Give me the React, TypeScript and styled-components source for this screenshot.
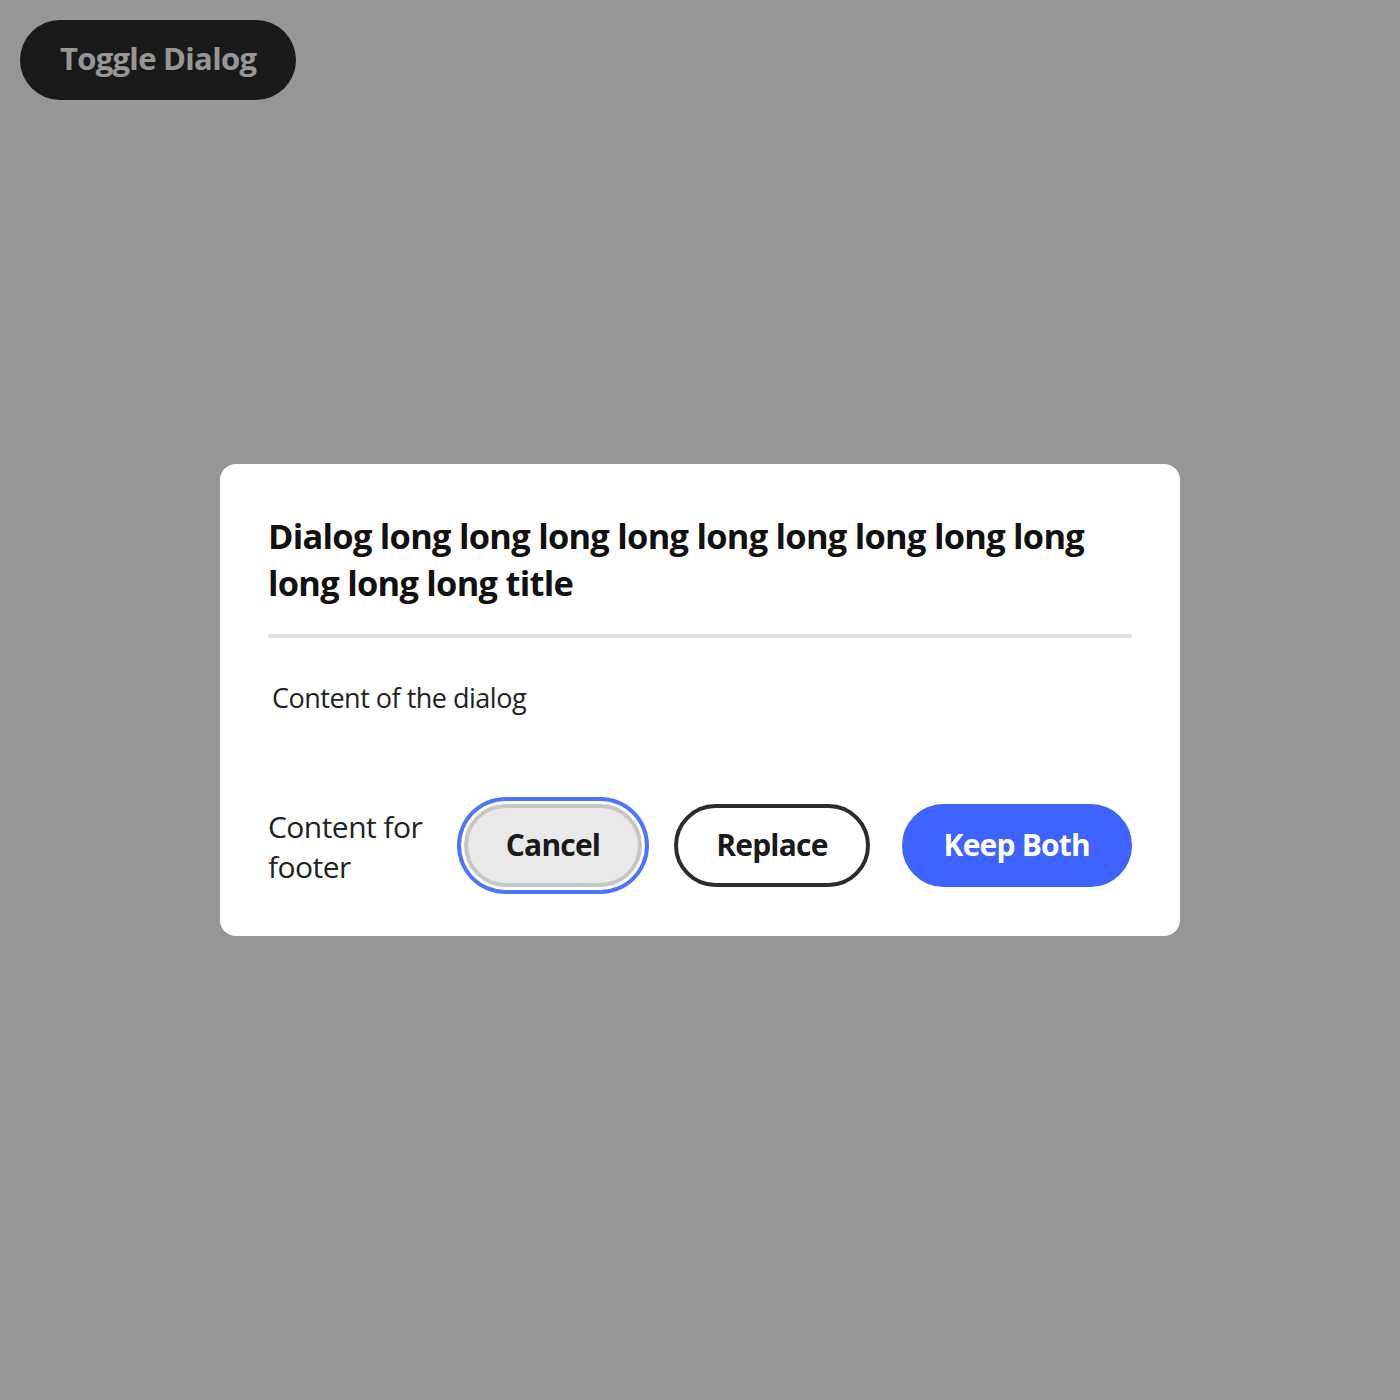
import React from "react";
import styled, { createGlobalStyle } from "styled-components";

const Global = createGlobalStyle`
  html, body { margin: 0; padding: 0; background: #ffffff; }
  body { font-family: "Open Sans", "Noto Sans", sans-serif; }
  * { box-sizing: border-box; }
`;

const Page = styled.div`
  padding: 20px;
  min-height: 1400px;
`;

const ToggleButton = styled.button`
  height: 80px;
  padding: 0 40px 4px;
  border-radius: 40px;
  border: none;
  background: #2c2c2c;
  color: #ffffff;
  font-family: "Open Sans", sans-serif;
  font-weight: 700;
  font-size: 31px;
  letter-spacing: -0.7px;
`;

const Underlay = styled.div`
  position: fixed;
  inset: 0;
  background: rgba(0, 0, 0, 0.41);
  display: flex;
  align-items: center;
  justify-content: center;
`;

const Dialog = styled.section`
  width: 960px;
  background: #ffffff;
  border-radius: 16px;
  padding: 48px 48px 49px;
  display: flex;
  flex-direction: column;
`;

const Title = styled.h2`
  margin: 0;
  font-family: "Open Sans", sans-serif;
  font-weight: 700;
  font-size: 34.4px;
  line-height: 47px;
  letter-spacing: -0.72px;
  color: #111111;
`;

const Divider = styled.hr`
  margin: 28px 0 0;
  border: none;
  height: 4px;
  border-radius: 2px;
  background: #e1e1e1;
`;

const Content = styled.p`
  margin: 40px 0 0 4px;
  font-family: "Open Sans", sans-serif;
  font-size: 27px;
  line-height: 40px;
  letter-spacing: -0.5px;
  color: #222222;
`;

const Footer = styled.footer`
  margin-top: 86px;
  display: flex;
  align-items: center;
  gap: 36px;
`;

const FooterText = styled.div`
  flex: 1 1 auto;
  padding-top: 3px;
  font-family: "Open Sans", sans-serif;
  font-size: 30px;
  line-height: 40px;
  letter-spacing: -0.55px;
  color: #222222;
`;

const ButtonGroup = styled.div`
  display: flex;
  align-items: center;
  gap: 32px;
  flex: 0 0 auto;
`;

type Variant = "secondary" | "outline" | "accent";

const Button = styled.button<{ $variant: Variant; $focused?: boolean }>`
  height: 83px;
  padding: 0 38px 2px;
  border-radius: 42px;
  font-family: "Open Sans", sans-serif;
  font-weight: 700;
  font-size: 30px;
  letter-spacing: -0.8px;
  border: 4px solid
    ${(p) =>
      p.$variant === "secondary"
        ? "#c6c6c6"
        : p.$variant === "outline"
        ? "#2c2c2c"
        : "#3e63ff"};
  background: ${(p) =>
    p.$variant === "secondary"
      ? "#e9e9e9"
      : p.$variant === "outline"
      ? "#ffffff"
      : "#3e63ff"};
  color: ${(p) => (p.$variant === "accent" ? "#ffffff" : "#1a1a1a")};
  ${(p) =>
    p.$focused
      ? "box-shadow: 0 0 0 3px #ffffff, 0 0 0 7px #4b75ff;"
      : ""}
`;

export default function App() {
  return (
    <>
      <Global />
      <Page>
        <ToggleButton>Toggle Dialog</ToggleButton>
      </Page>
      <Underlay>
        <Dialog role="dialog">
          <Title>
            Dialog long long long long long long long long long long long long
            title
          </Title>
          <Divider />
          <Content>Content of the dialog</Content>
          <Footer>
            <FooterText>Content for footer</FooterText>
            <ButtonGroup>
              <Button $variant="secondary" $focused>
                Cancel
              </Button>
              <Button $variant="outline">Replace</Button>
              <Button $variant="accent">Keep Both</Button>
            </ButtonGroup>
          </Footer>
        </Dialog>
      </Underlay>
    </>
  );
}
